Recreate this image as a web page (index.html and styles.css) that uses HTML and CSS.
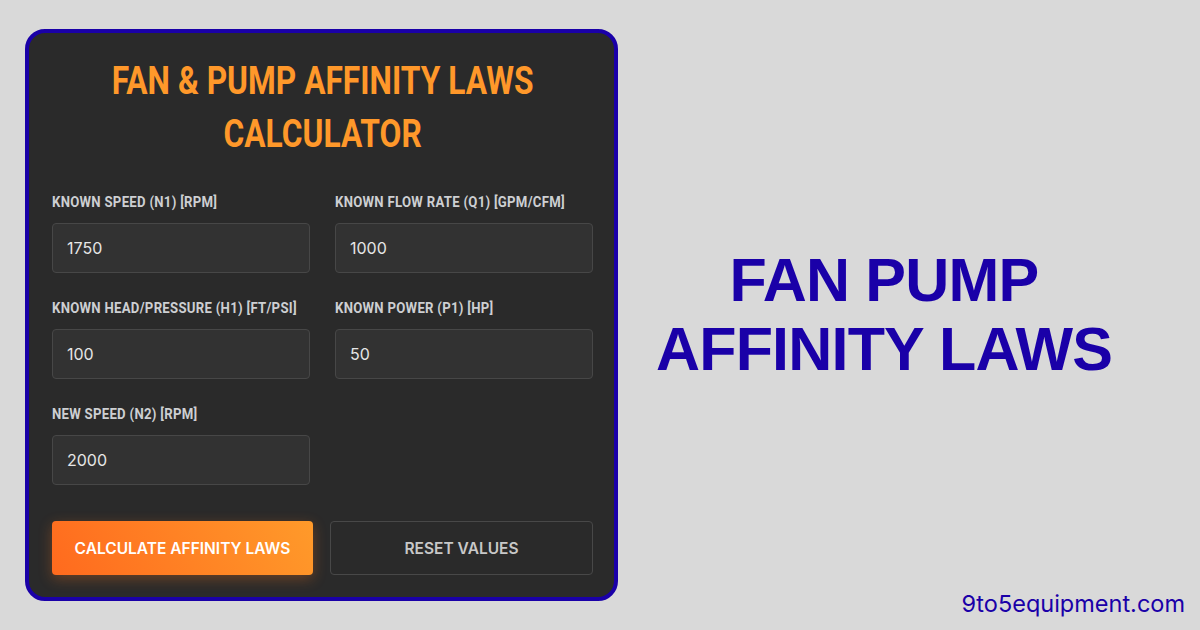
FILE: index.html
```html
<!DOCTYPE html>
<html lang="en">
<head>
  <meta charset="UTF-8">
  <meta name="viewport" content="width=device-width, initial-scale=1">
  <title>Fan &amp; Pump Affinity Laws Calculator</title>
  <link rel="stylesheet" href="styles.css">
</head>
<body>

  <!-- CALCULATOR CARD -->
  <div class="calc-card">
    <h1 class="calc-title">Fan &amp; Pump Affinity Laws<br>Calculator</h1>

    <div class="field-grid">
      <div class="field">
        <label for="n1">Known Speed (N1) [RPM]</label>
        <input type="text" id="n1" value="1750">
      </div>
      <div class="field">
        <label for="q1">Known Flow Rate (Q1) [GPM/CFM]</label>
        <input type="text" id="q1" value="1000">
      </div>
      <div class="field">
        <label for="h1">Known Head/Pressure (H1) [FT/PSI]</label>
        <input type="text" id="h1" value="100">
      </div>
      <div class="field">
        <label for="p1">Known Power (P1) [HP]</label>
        <input type="text" id="p1" value="50">
      </div>
      <div class="field">
        <label for="n2">New Speed (N2) [RPM]</label>
        <input type="text" id="n2" value="2000">
      </div>
    </div>

    <div class="btn-row">
      <button class="btn btn-calc">Calculate Affinity Laws</button>
      <button class="btn btn-reset">Reset Values</button>
    </div>
  </div>

  <!-- RIGHT SIDE BANNER -->
  <div class="side">
    <div class="side-head">
      <h2><span>FAN PUMP</span><span>AFFINITY LAWS</span></h2>
    </div>
    <div class="site-url">9to5equipment.com</div>
  </div>

</body>
</html>
```

FILE: styles.css
```css
* { margin: 0; padding: 0; box-sizing: border-box; }
body {
  width: 1200px; height: 630px; overflow: hidden;
  background: #d9d9d9; display: flex;
  font-family: 'Inter', 'Liberation Sans', sans-serif;
}

/* CARD */
.calc-card {
  width: 593px; height: 572px; margin: 29px 0 0 25px;
  background: #2a2a2a; border: 4px solid #1a00a8; border-radius: 20px;
  padding: 22px 21px 21px 23px;
}
/* no condensed face installed, so Roboto is squeezed horizontally */
.calc-title {
  width: 130%; margin: 0 -15% 33px;
  font-family: 'Roboto', sans-serif;
  font-weight: 700; font-size: 38px; line-height: 53px;
  text-transform: uppercase; text-align: center; color: #ff982a;
  transform: scaleX(0.835);
}

/* FIELDS */
.field-grid { display: grid; grid-template-columns: repeat(2, minmax(0, 1fr)); column-gap: 25px; }
.field { margin-bottom: 27px; }
.field label {
  display: block; margin-bottom: 13px; white-space: nowrap;
  font-family: 'Roboto', sans-serif;
  font-weight: 700; font-size: 14px; line-height: 16px;
  text-transform: uppercase; letter-spacing: 0.3px; color: #cdcfd2;
  transform: scaleX(0.94); transform-origin: left center;
}
.field input {
  display: block; width: 100%; height: 50px;
  background: #323232; border: 1px solid #474747; border-radius: 4px;
  padding: 0 14px; color: #e6e6e6;
  font-family: 'Inter', sans-serif; font-size: 16px; outline: none;
}

/* BUTTONS */
.btn-row { display: flex; gap: 17px; margin-top: 9px; }
.btn {
  flex: 1; height: 54px; border-radius: 4px; cursor: pointer;
  font-family: 'Inter', sans-serif; font-weight: 600; font-size: 15.5px;
  text-transform: uppercase;
}
.btn-calc {
  border: none; color: #fff;
  background: linear-gradient(60deg, #ff6a1e 0%, #ff9a2a 100%);
  box-shadow: 0 4px 14px rgba(255,120,30,0.3);
}
.btn-reset { background: transparent; border: 1px solid #484848; color: #c8c8c8; }

/* RIGHT SIDE */
.side {
  flex: 1; display: flex; flex-direction: column;
  padding: 40px 15px 12px 0;
}
.side-head {
  flex: 1; display: flex; align-items: center; justify-content: center;
  padding-right: 35px;
}
.side-head h2 {
  font-family: 'Liberation Sans', 'Noto Sans', sans-serif; font-weight: 700;
  font-size: 61px; letter-spacing: -0.8px;
  text-align: center; color: #1a00a8;
}
.side-head h2 span { display: block; height: 69px; line-height: 69px; }
.site-url {
  text-align: right; color: #1a00a8;
  font-family: 'Inter', sans-serif; font-size: 23.5px; line-height: 28px;
}
```
